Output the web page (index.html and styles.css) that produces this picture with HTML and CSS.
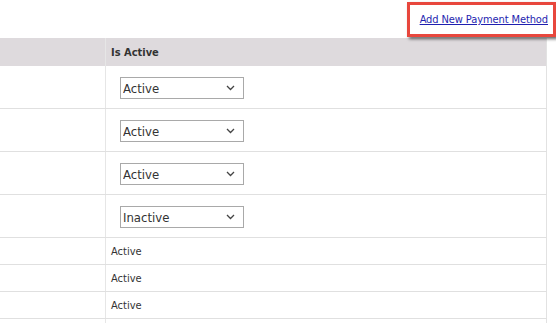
FILE: index.html
```html
<!DOCTYPE html>
<html lang="en">
<head>
    <meta charset="UTF-8">
    <title>Payment Methods</title>
    <link rel="stylesheet" href="styles.css">
</head>
<body>

    <div class="toolbar">
        <div class="highlight">
            <a href="#" class="add-link">Add New Payment Method</a>
        </div>
    </div>

    <table class="methods-table">
        <thead>
            <tr>
                <th class="col-name"></th>
                <th>Is Active</th>
            </tr>
        </thead>
        <tbody>
            <tr class="edit-row">
                <td></td>
                <td>
                    <select class="status-select">
                        <option selected>Active</option>
                        <option>Inactive</option>
                    </select>
                </td>
            </tr>
            <tr class="edit-row">
                <td></td>
                <td>
                    <select class="status-select">
                        <option selected>Active</option>
                        <option>Inactive</option>
                    </select>
                </td>
            </tr>
            <tr class="edit-row">
                <td></td>
                <td>
                    <select class="status-select">
                        <option selected>Active</option>
                        <option>Inactive</option>
                    </select>
                </td>
            </tr>
            <tr class="edit-row">
                <td></td>
                <td>
                    <select class="status-select">
                        <option>Active</option>
                        <option selected>Inactive</option>
                    </select>
                </td>
            </tr>
            <tr class="view-row">
                <td></td>
                <td>Active</td>
            </tr>
            <tr class="view-row">
                <td></td>
                <td>Active</td>
            </tr>
            <tr class="view-row">
                <td></td>
                <td>Active</td>
            </tr>
            <tr class="view-row">
                <td></td>
                <td></td>
            </tr>
        </tbody>
    </table>

</body>
</html>
```

FILE: styles.css
```css
body {
    font-family: Tahoma, "DejaVu Sans Condensed", "DejaVu Sans", sans-serif;
    font-size: 11px;
    color: #333;
    background-color: #fff;
    margin: 0;
    overflow: hidden;
}

/* --- top bar with the link --- */
.toolbar {
    height: 38px;
    display: flex;
    justify-content: flex-end;
    align-items: flex-start;
}

.highlight {
    margin-top: 2px;
    margin-right: 0;
    height: 29px;
    padding: 0 5px 0 10px;
    border: 3px solid #e8473d;
    box-shadow: 2px 2px 3px rgba(0, 0, 0, 0.6);
    display: flex;
    align-items: center;
}

.add-link {
    color: #1f1fb0;
    text-decoration: underline;
    font-size: 11px;
    letter-spacing: -0.1px;
}

/* --- table --- */
.methods-table {
    width: 547px;
    border-collapse: collapse;
    border-right: 1px solid #e2e2e2;
}

.methods-table th,
.methods-table td {
    text-align: left;
    padding: 0 5px;
    border-bottom: 1px solid #e0e0e0;
    border-left: 1px solid #e6e6e6;
}

.methods-table th:first-child,
.methods-table td:first-child {
    width: 95px;
    border-left: none;
}

.methods-table thead th {
    background-color: #dedadd;
    height: 28px;
    font-weight: 700;
    color: #333;
    border-bottom: none;
}

.edit-row td {
    height: 42px;
}

.view-row td {
    height: 26px;
}

.status-select {
    appearance: none;
    -webkit-appearance: none;
    width: 124px;
    height: 22px;
    margin-left: 9px;
    margin-top: 2px;
    font-family: Tahoma, "DejaVu Sans Condensed", "DejaVu Sans", sans-serif;
    font-size: 13px;
    color: #333;
    background-color: #fff;
    background-image: url("data:image/svg+xml;utf8,<svg xmlns='http://www.w3.org/2000/svg' width='9' height='6' viewBox='0 0 9 6'><path d='M1 1 L4.5 4.5 L8 1' fill='none' stroke='%23444' stroke-width='1.3'/></svg>");
    background-repeat: no-repeat;
    background-position: right 8px center;
    border: 1px solid #a9a9a9;
    border-radius: 0;
    padding: 0 2px;
}
```
